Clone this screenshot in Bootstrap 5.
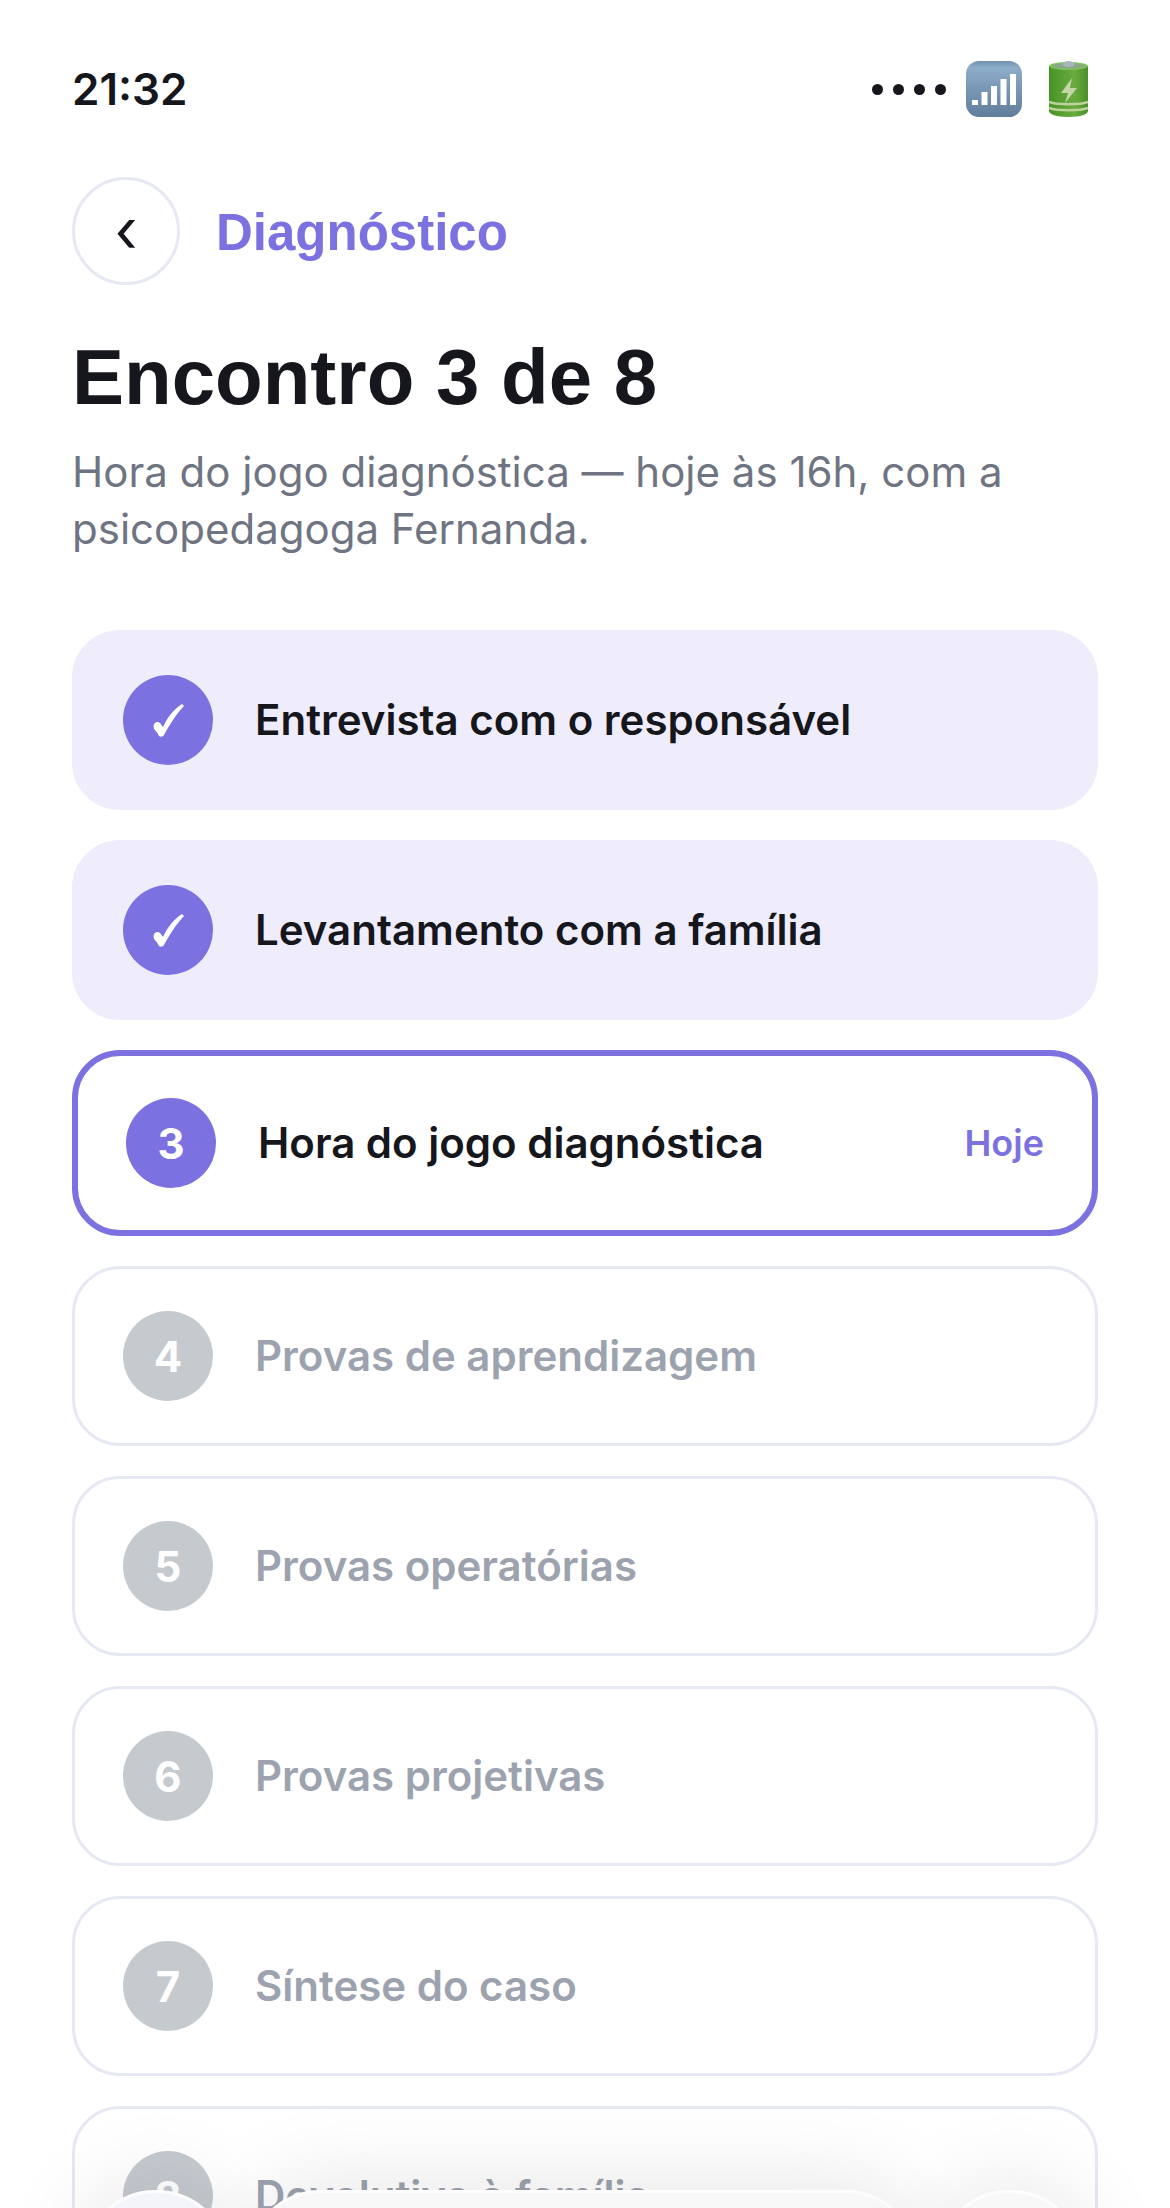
<!DOCTYPE html>
<html lang="en">
<head>
  <meta charset="UTF-8" />
  <title>Diagnóstico</title>
  <link href="https://cdn.jsdelivr.net/npm/bootstrap@5.3.3/dist/css/bootstrap.min.css" rel="stylesheet" />
  <style>
    html, body { height: 100%; }
    body {
      background: #fff;
      color: #16161d;
      font-family: "Inter", "Liberation Sans", sans-serif;
      font-optical-sizing: none;
      overflow: hidden;
    }
    .phone { width: 1170px; height: 2208px; overflow: hidden; }
    .status-row { padding: 0 82px 0 72px; height: 126px; padding-top: 52px; }
    .clock { font-size: 44px; font-weight: 600; line-height: 56px; }
    .dot { width: 11px; height: 11px; background: #16161d; border-radius: 50%; }
    .dots { gap: 10px; margin-right: 20px; }
    .back-row { padding: 51px 72px 0; gap: 36px; }
    .back-btn {
      width: 108px; height: 108px; padding: 0 0 2px;
      background: #fff; border: 3px solid #e6e9f3; border-radius: 50%;
      font-size: 60px; line-height: 1; color: #16161d;
    }
    .crumb { font-family: "Liberation Sans", sans-serif; font-weight: 700; font-size: 51px; color: #7c71e0; padding-top: 4px; }
    .page-title {
      font-family: "Liberation Sans", sans-serif; font-weight: 700; font-size: 78px;
      line-height: 90px; margin: 47px 72px 0; color: #16161d;
    }
    .page-sub { font-size: 42px; line-height: 57px; color: #6f7482; margin: 21px 72px 0; }
    .step-list { padding: 0 72px; margin-top: 73px; gap: 30px; }
    .step {
      padding: 42px 48px; gap: 42px;
      border: 3px solid #e6e9f3; border-radius: 48px;
      background: #fff;
    }
    .step-done { background: #efecfb; border-color: #efecfb; }
    .step-now { border: 6px solid #7c71e0; }
    .step-dot {
      width: 90px; height: 90px; border-radius: 50%; flex: none;
      background: #c5cacf; color: #fff; font-size: 42px; font-weight: 700;
    }
    .step-done .step-dot, .step-now .step-dot { background: #7c71e0; }
    .step-name { font-size: 42px; font-weight: 600; line-height: 54px; color: #9ca3af; }
    .step-done .step-name, .step-now .step-name { color: #16161d; }
    .step-tag { font-size: 36px; font-weight: 600; color: #7c71e0; }
    .tab-bar { position: fixed; left: 81px; top: 2190px; gap: 15px; }
    .tab-ball, .tab-pill {
      height: 150px; border-radius: 75px;
      background: #f8f8f9; border: 3px solid #fdfdfd;
      box-shadow: 0 -6px 90px rgba(20, 20, 40, .1);
    }
    .tab-ball { width: 150px; }
    .tab-ball-on { background: #f3f5fb; }
    .tab-pill { width: 674px; }
  </style>
</head>
<body>
  <div class="phone">
    <div class="status-row d-flex justify-content-between align-items-center">
      <span class="clock">21:32</span>
      <div class="d-flex align-items-center">
        <div class="dots d-flex"><i class="dot"></i><i class="dot"></i><i class="dot"></i><i class="dot"></i></div>
        <svg width="56" height="56" viewBox="0 0 56 56">
          <defs><linearGradient id="sig" x1="0" y1="0" x2="0" y2="1"><stop offset="0" stop-color="#6f8fb0"/><stop offset=".12" stop-color="#8dacca"/><stop offset="1" stop-color="#607d9b"/></linearGradient></defs>
          <rect width="56" height="56" rx="13" fill="url(#sig)"/>
          <g fill="#fff"><rect x="6" y="39" width="6" height="5"/><rect x="15.500" y="31" width="6" height="13"/><rect x="25" y="25" width="6" height="19"/><rect x="34.500" y="18" width="6" height="26"/><rect x="44" y="13" width="6" height="31"/></g>
        </svg>
        <svg width="39" height="56" viewBox="0 0 39 56" class="battery-icon" style="margin-left: 27px">
          <defs><linearGradient id="bat" x1="0" y1="0" x2="1" y2="0"><stop offset="0" stop-color="#469326"/><stop offset=".65" stop-color="#6aab3f"/><stop offset="1" stop-color="#4a9028"/></linearGradient></defs>
          <path d="M0 5h39v45c0 3-7 6-19.500 6S0 53 0 50z" fill="url(#bat)"/>
          <ellipse cx="19.500" cy="5" rx="19.500" ry="4" fill="#7fc25a"/>
          <ellipse cx="19.500" cy="5" rx="16" ry="2.500" fill="#8aa78a"/>
          <ellipse cx="19.500" cy="3" rx="6" ry="3" fill="#a9b6c0"/>
          <path d="M23 17 12 32h7l-3 10 12-15h-7z" fill="#c4d6a8"/>
          <path d="M0 41c8 3 31 3 39 0M0 47c8 3 31 3 39 0" fill="none" stroke="#bcd39a" stroke-width="2.500"/>
        </svg>
      </div>
    </div>

    <div class="back-row d-flex align-items-center">
      <button class="back-btn d-flex align-items-center justify-content-center">‹</button>
      <span class="crumb">Diagnóstico</span>
    </div>

    <h1 class="page-title">Encontro 3 de 8</h1>
    <p class="page-sub">Hora do jogo diagnóstica — hoje às 16h, com a<br>psicopedagoga Fernanda.</p>

    <div class="step-list d-flex flex-column">
      <div class="step step-done d-flex align-items-center">
        <span class="step-dot d-flex align-items-center justify-content-center">
          <svg width="31" height="33" viewBox="0 0 31 33"><path d="M.5 22C1 18 5 17 7 19l3 4C14 14 21 5 29 0l2 2C23 10 16 22 11 31c-1 2-4 2-5 1-2-4-4-6-5-7z" fill="#fff"/></svg>
        </span>
        <span class="step-name">Entrevista com o responsável</span>
      </div>
      <div class="step step-done d-flex align-items-center">
        <span class="step-dot d-flex align-items-center justify-content-center">
          <svg width="31" height="33" viewBox="0 0 31 33"><path d="M.5 22C1 18 5 17 7 19l3 4C14 14 21 5 29 0l2 2C23 10 16 22 11 31c-1 2-4 2-5 1-2-4-4-6-5-7z" fill="#fff"/></svg>
        </span>
        <span class="step-name">Levantamento com a família</span>
      </div>
      <div class="step step-now d-flex align-items-center">
        <span class="step-dot d-flex align-items-center justify-content-center">3</span>
        <span class="step-name flex-grow-1">Hora do jogo diagnóstica</span>
        <span class="step-tag">Hoje</span>
      </div>
      <div class="step d-flex align-items-center">
        <span class="step-dot d-flex align-items-center justify-content-center">4</span>
        <span class="step-name">Provas de aprendizagem</span>
      </div>
      <div class="step d-flex align-items-center">
        <span class="step-dot d-flex align-items-center justify-content-center">5</span>
        <span class="step-name">Provas operatórias</span>
      </div>
      <div class="step d-flex align-items-center">
        <span class="step-dot d-flex align-items-center justify-content-center">6</span>
        <span class="step-name">Provas projetivas</span>
      </div>
      <div class="step d-flex align-items-center">
        <span class="step-dot d-flex align-items-center justify-content-center">7</span>
        <span class="step-name">Síntese do caso</span>
      </div>
      <div class="step d-flex align-items-center">
        <span class="step-dot d-flex align-items-center justify-content-center">8</span>
        <span class="step-name">Devolutiva à família</span>
      </div>
    </div>
  </div>

  <div class="tab-bar d-flex">
    <div class="tab-ball tab-ball-on"></div>
    <div class="tab-pill"></div>
    <div class="tab-ball"></div>
  </div>

  <script src="https://cdn.jsdelivr.net/npm/bootstrap@5.3.3/dist/js/bootstrap.bundle.min.js"></script>
</body>
</html>
